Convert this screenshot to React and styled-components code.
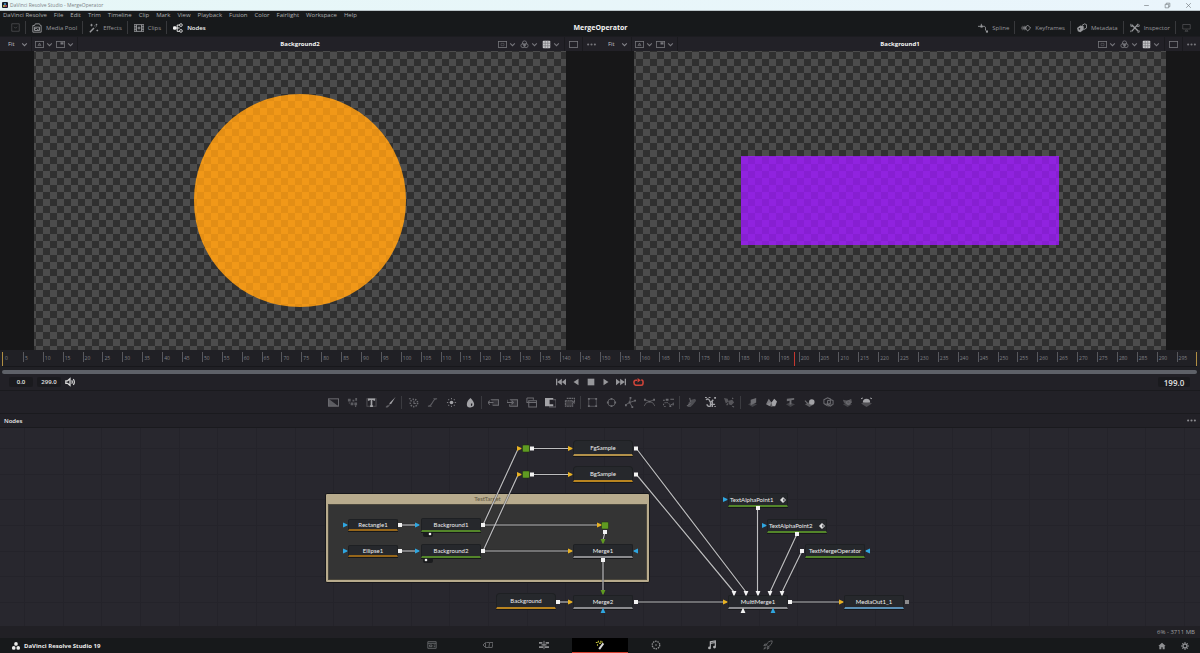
import styled, { createGlobalStyle, css } from "styled-components";

const GlobalStyle = createGlobalStyle`
  * {
    box-sizing: border-box;
  }

  body {
    margin: 0;
    background: #17191b;
    color: #a0a0a3;
    font-family: "Open Sans", "Noto Sans", sans-serif;
    font-size: 6px;
    line-height: 8px;
  }

  button,
  input,
  select {
    margin: 0;
    padding: 0;
    border: 0;
    background: none;
    color: inherit;
    font: inherit;
  }
`;

const Page = styled.div`
  display: flex;
  flex-direction: column;
  min-height: 100vh;
`;

const TitleBar = styled.header`
  display: flex;
  align-items: center;
  gap: 2px;
  height: 11px;
  padding: 0 8px 0 2px;
  background: linear-gradient(90deg, #e6f7f7, #eaf5fc);
  border-bottom: 1px solid #b9c4c8;
  color: #7c8286;
  font-size: 5px;
`;

const WindowButtons = styled.div`
  display: flex;
  gap: 14px;
  margin-left: auto;
  color: #70777b;
`;

const MenuBar = styled.nav`
  display: flex;
  align-items: center;
  gap: 7px;
  height: 8px;
  padding: 0 3px;
  color: #b0b1b3;
`;

const Toolbar = styled.div`
  display: flex;
  align-items: center;
  justify-content: space-between;
  height: 17px;
  padding: 0 4px 0 5px;
`;

const ToolGroup = styled.div`
  display: flex;
  flex: 1;
  align-items: center;
  justify-content: ${(props) => (props.$end ? "flex-end" : "flex-start")};
`;

const ToolButton = styled.button`
  display: flex;
  align-items: center;
  gap: 4px;
  height: 13px;
  padding: 0 5px 0 6px;
  border-left: ${(props) => (props.$first ? "0" : "1px solid #38393c")};
  color: ${(props) => (props.$active ? "#f2f2f2" : "#97989b")};
  font-weight: ${(props) => (props.$active ? 600 : 400)};
`;

const ProjectName = styled.h1`
  margin: 0;
  color: #f4f4f4;
  font-size: 7px;
  font-weight: 700;
`;

const IconButton = styled.button`
  display: flex;
  align-items: center;
  justify-content: center;
  gap: 2px;
`;

const Viewers = styled.main`
  display: flex;
  flex: 1;
  min-height: 200px;
`;

const Viewer = styled.section`
  display: flex;
  flex: 1;
  flex-direction: column;
  min-width: 0;
  background: #171718;
`;

const ViewerBar = styled.div`
  display: flex;
  align-items: center;
  justify-content: space-between;
  height: 15px;
  padding: 0 4px;
  background: #222127;
  border-top: 1px solid #1c1c20;
  color: #77777c;
`;

const ViewerGroup = styled.div`
  display: flex;
  flex: 1;
  align-items: center;
  gap: ${(props) => (props.$end ? 4 : 3)}px;
  justify-content: ${(props) => (props.$end ? "flex-end" : "flex-start")};
`;

const ViewerTitle = styled.h2`
  margin: 0;
  color: #f4f4f4;
  font-size: 6px;
  font-weight: 700;
`;

const FitLabel = styled.label`
  display: flex;
  align-items: center;
  gap: 5px;
  padding-left: 4px;
  color: #c0c0c4;

  svg {
    color: #85858a;
  }
`;

const FitSelect = styled.select`
  width: 8px;
  appearance: none;
  outline: none;
`;

const Divider = styled.span`
  width: 1px;
  height: 14px;
  background: #1a1a1e;
`;

const ViewerStage = styled.div`
  display: flex;
  flex: 1;
  justify-content: center;
`;

const Checkerboard = styled.div`
  position: relative;
  display: flex;
  align-items: center;
  justify-content: center;
  height: 100%;
  aspect-ratio: 16 / 9;
  background: conic-gradient(
      #333333 25%,
      #4c4c4c 0 50%,
      #333333 0 75%,
      #4c4c4c 0
    )
    2px 1px / 14px 14px;

  /* lets the checks show through the translucent shapes */
  &::after {
    content: "";
    position: absolute;
    inset: 0;
    pointer-events: none;
    background: conic-gradient(
        rgba(0, 0, 0, 0.05) 25%,
        transparent 0 50%,
        rgba(0, 0, 0, 0.05) 0 75%,
        transparent 0
      )
      2px 1px / 14px 14px;
  }
`;

const Circle = styled.div`
  width: 40%;
  aspect-ratio: 1;
  border-radius: 50%;
  background: rgba(255, 158, 20, 0.92);
`;

const Bar = styled.div`
  width: 60%;
  height: 30%;
  background: rgba(150, 32, 235, 0.92);
`;

const Timeline = styled.div`
  height: 24px;
  padding: 2px 3px 0 2px;
  background: #202025;
`;

const Ruler = styled.div`
  position: relative;
  display: flex;
  height: 14px;
  border-left: 1px solid #b18f43;
  border-right: 1px solid #b18f43;
`;

const Tick = styled.span`
  flex: 1;
  min-width: 0;
  height: 10px;
  padding: 2px 0 0 1px;
  border-left: 1px solid ${(props) => (props.$hidden ? "transparent" : "#58585d")};
  color: #808085;
  font-size: 5px;
`;

const Playhead = styled.span`
  position: absolute;
  top: 0;
  bottom: 0;
  width: 1px;
  background: #c5372f;
`;

const ScrollTrack = styled.div`
  height: 8px;
  padding-top: 3px;
  border-top: 1px solid #17171b;
`;

const ScrollThumb = styled.div`
  height: 4px;
  border-radius: 2px;
  background: #5e6168;
`;

const Transport = styled.div`
  display: flex;
  align-items: center;
  justify-content: space-between;
  height: 17px;
  padding: 0 10px 0 9px;
  background: #222127;
  border-bottom: 1px solid #1a1a1e;
`;

const TransportGroup = styled.div`
  display: flex;
  flex: 1;
  align-items: center;
  gap: 4px;
  color: #dcdcdc;
  justify-content: ${(props) => (props.$end ? "flex-end" : "flex-start")};
`;

const PlaybackButtons = styled.div`
  display: flex;
  gap: 5px;
  color: #97979b;
`;

const LoopButton = styled(IconButton)`
  margin-left: 2px;
  color: #cf4439;
`;

const TimeField = styled.input`
  width: ${(props) => (props.$large ? 32 : 24)}px;
  height: 10px;
  border-radius: 2px;
  background: #1a1a1e;
  color: #e3e3e3;
  font-size: ${(props) => (props.$large ? 8 : 6)}px;
  font-weight: 600;
  text-align: center;
`;

const EffectsBar = styled.div`
  display: flex;
  align-items: center;
  justify-content: center;
  height: 23px;
  background: #222127;
  border-bottom: 1px solid #1a1a1e;
`;

const EffectGroup = styled.div`
  display: flex;
  align-items: center;

  & + & {
    margin-left: 1px;
    padding-left: 2px;
    border-left: 1px solid #3b3b40;
  }
`;

const EffectButton = styled(IconButton)`
  width: 19px;
  height: 13px;
  color: ${(props) => (props.$bright ? "#a3a3a7" : "#6c6c71")};
`;

const NodesHeader = styled.div`
  display: flex;
  align-items: center;
  justify-content: space-between;
  height: 14px;
  padding: 0 4px;
  background: #222127;
  border-bottom: 1px solid #1a1a1e;
  color: #8c8c90;
`;

const NodesTitle = styled.h2`
  margin: 0;
  color: #ececec;
  font-size: 6px;
  font-weight: 600;
`;

const Graph = styled.section`
  position: relative;
  height: 198px;
  overflow: hidden;
  background: #28272e;
`;

const GraphLayer = styled.svg`
  position: absolute;
  top: 0;
  left: 0;
  width: 100%;
  height: 100%;
`;

const Group = styled.div`
  position: absolute;
  top: 65px;
  left: 325px;
  display: flex;
  flex-direction: column;
  width: 325px;
  height: 90px;
  padding: 0 2px 2px;
  border: 1px solid #17171a;
  border-radius: 2px;
  background: #b8ab8d;
  color: #5f563f;
  font-family: Lato, "Open Sans", sans-serif;
  text-align: center;
`;

const GroupTitle = styled.div`
  height: 10px;
  line-height: 10px;
`;

const GroupBody = styled.div`
  flex: 1;
  border: 1px solid #4b473c;
  background: #343434;
`;

const NodeBox = styled.div`
  position: absolute;
  top: ${(props) => props.$y}px;
  left: ${(props) => props.$x}px;
  display: flex;
  align-items: center;
  justify-content: ${(props) => (props.$keyed ? "space-between" : "center")};
  width: ${(props) => (props.$small ? 50 : 60)}px;
  height: ${(props) => (props.$small ? 12 : 14)}px;
  padding: 0 1px;
  border: 1px solid #1e2023;
  border-bottom: 2px solid ${(props) => props.$color};
  border-radius: 2px 2px 0 0;
  background: #26282c;
  box-shadow: 0 1px 0 #17181a;
  color: #f0f0f1;
  font-family: Lato, "Open Sans", sans-serif;
  white-space: nowrap;

  ${(props) =>
    props.$tall &&
    css`
      height: 16px;
      border-radius: 4px 4px 0 0;
    `}
`;

const StatusBar = styled.div`
  display: flex;
  align-items: center;
  justify-content: flex-end;
  height: 12px;
  padding: 0 5px;
  background: #212025;
`;

const PageBar = styled.footer`
  display: flex;
  align-items: center;
  justify-content: space-between;
  height: 15px;
  padding: 0 11px;
`;

const Brand = styled.div`
  display: flex;
  flex: 1;
  align-items: center;
  gap: 3px;
  color: #ececec;
  font-weight: 700;
`;

const Pages = styled.nav`
  display: flex;
`;

const PageButton = styled(IconButton)`
  width: 56px;
  height: 15px;
  border-bottom: 1px solid ${(props) => (props.$active ? "#d8402f" : "transparent")};
  background: ${(props) => (props.$active ? "#000" : "none")};
  color: ${(props) => props.$tint || "#66676a"};
`;

const PageBarEnd = styled.div`
  display: flex;
  flex: 1;
  justify-content: flex-end;
  gap: 15px;
  color: #8e8f92;
`;

// Filled parts of the otherwise stroked drawings.
const f = { fill: "currentColor", stroke: "none" };
const slab = <path {...f} opacity=".45" d="M1 8l4-2 6 2-5 3z" />;

const icons = {
  app: (
    <>
      <rect width="12" height="12" rx="2" fill="#16202b" stroke="none" />
      <circle cx="6" cy="4" r="2" fill="#4aa3d8" stroke="none" />
      <circle cx="4" cy="8" r="2" fill="#d9c34a" stroke="none" />
      <circle cx="8" cy="8" r="2" fill="#d2506a" stroke="none" />
    </>
  ),
  brand: (
    <>
      <circle {...f} cx="6" cy="3.500" r="2.200" />
      <circle {...f} cx="3.300" cy="8.300" r="2.200" />
      <circle {...f} cx="8.700" cy="8.300" r="2.200" />
    </>
  ),
  minimize: <path d="M2 6h8" />,
  restore: <path d="M2 4h6v6H2zM4 4V2h6v6H8" />,
  close: <path d="M2 2l8 8M10 2l-8 8" />,
  boxDown: <path d="M1 1h10v10H1zM4 5l2 2 2-2" opacity=".4" />,
  chevron: <path d="M2 4l4 4 4-4" strokeWidth="1.800" />,
  mediaPool: <path d="M1 3h2l1-2h5l1 2h1v8H1zM3 9V5h6v4zM3 8l2-2 2 2 1-1 1 1" />,
  effects: (
    <>
      <path d="M1 11l5-5" strokeWidth="1.8" />
      <path d="M3 1v3M1.500 2.500h3M9 1v2M8 2h2M8 5l1-1M10 8v2M9 9h2M7 3v1" />
    </>
  ),
  clips: <path d="M0 2h12v8H0zM3 2v8M9 2v8M0 4h3M0 6h3M0 8h3M9 4h3M9 6h3M9 8h3M5 5h2v2H5z" />,
  nodes: (
    <>
      <path d="M3 6h2V2.500h3M5 6v4h3M5 6h3" />
      <rect {...f} x="0" y="4" width="4" height="4" rx="1.500" />
      <rect x="8" y="1" width="3" height="3" rx="1" />
      <rect x="8" y="8" width="3" height="3" rx="1" />
    </>
  ),
  spline: (
    <>
      <path d="M0 4h7c2 0 2 1 2 3v2M4 4V1" />
      <rect {...f} x="3" y="3" width="2.500" height="2.500" />
      <rect {...f} x="9.500" y="9" width="2.500" height="2.500" />
    </>
  ),
  keyframes: (
    <>
      <path {...f} d="M2 3l3 3-3 3-3-3z" opacity=".35" />
      <path {...f} d="M4.500 3l3 3-3 3-3-3z" opacity=".5" />
      <path d="M8 2.500L11.500 6 8 9.500 4.500 6z" />
    </>
  ),
  metadata: (
    <>
      <path {...f} d="M0 6l4-3 4 1v4l-4 3-3-1z" />
      <path d="M6 3l3-2 2.500 1v4L8 8" />
      <circle cx="3" cy="7" r="1" fill="#17191b" stroke="none" />
    </>
  ),
  inspector: (
    <>
      <path d="M2 2l8 8M10 1L2 10" strokeWidth="1.600" />
      <path d="M1 1v3h2M8 4h3V2M9 11h2V9M1 9v2" />
    </>
  ),
  monitor: <path d="M1 2h10v6H1zM4 11l2-2 2 2z" opacity=".4" />,
  bufferA: (
    <>
      <rect x="0.500" y="2" width="11" height="8" />
      <path d="M4 8l2-4 2 4M5 7h2" />
    </>
  ),
  subView: (
    <>
      <rect x="0.500" y="2" width="11" height="8" />
      <rect {...f} x="6" y="3" width="4" height="3" />
    </>
  ),
  roi: (
    <>
      <rect x="0.500" y="2" width="11" height="8" />
      <path d="M4 4.500v3M4 4.500h4v3H4" opacity=".5" />
    </>
  ),
  rgb: (
    <>
      <circle cx="6" cy="4" r="2.800" />
      <circle cx="4" cy="7.500" r="2.800" />
      <circle cx="8" cy="7.500" r="2.800" />
      <circle {...f} cx="6" cy="6.500" r="1.600" />
    </>
  ),
  grid: (
    <>
      <rect x="1" y="1" width="10" height="10" rx="1" fill="#c9c9cc" stroke="none" />
      <path d="M4.300 1v10M7.700 1v10M1 4.300h10M1 7.700h10" stroke="#77777c" strokeWidth=".9" />
    </>
  ),
  frame: <rect x="0.500" y="2" width="11" height="8" />,
  dots: (
    <>
      <circle {...f} cx="1.500" cy="6" r="1.400" />
      <circle {...f} cx="6" cy="6" r="1.400" />
      <circle {...f} cx="10.500" cy="6" r="1.400" />
    </>
  ),
  speaker: (
    <>
      <path d="M1 4.500h2l3-2.500v8L3 7.500H1z" strokeWidth="1.500" />
      <path d="M8 4q1.500 2 0 4M10 2.500q2.500 3.500 0 7" strokeWidth="1.400" />
    </>
  ),
  first: <path {...f} d="M0 2h1.500v8H0zM7 2v8L1.500 6zM12 2v8L7 6z" />,
  reverse: <path {...f} d="M9 2v8L3 6z" />,
  stop: <rect {...f} x="2" y="2" width="8" height="8" />,
  play: <path {...f} d="M3 2v8l6-4z" />,
  last: <path {...f} d="M10.500 2H12v8h-1.500zM5 2v8l5.500-4zM0 2v8l5-4z" />,
  loop: (
    <>
      <path d="M4.500 3.500H3Q1 3.500 1 6t2 3h6q2 0 2-3T9 3.500" strokeWidth="1.700" />
      <path {...f} d="M5 1v5l3.500-2.500z" />
    </>
  ),
  background: (
    <>
      <rect x="0.500" y="2" width="11" height="8" />
      <path {...f} d="M.5 2l11 8H.5z" opacity=".8" />
    </>
  ),
  noise: (
    <>
      <path {...f} d="M1 2h3v3H1zM6 3h2v2H6zM9 1h2v3H9zM4 6h3v3H4zM8 6h3v3H8z" opacity=".8" />
      <path {...f} d="M2 6h1v1H2zM9 9h1v2H9z" />
    </>
  ),
  text: (
    <>
      <path d="M1 2h10v8H1z" opacity=".35" />
      <path d="M3 4V2.500h6V4M6 2.500V10M4.500 10h3" strokeWidth="1.800" />
    </>
  ),
  paint: (
    <>
      <path {...f} d="M11.500 0l-5 8-2-1z" />
      <path d="M5 8q-1 3-4 3 2-1 1.500-2" opacity=".5" />
    </>
  ),
  tracker: (
    <>
      <circle cx="6.500" cy="6.500" r="4" strokeDasharray="1.500 1.300" strokeWidth="1.700" />
      <path d="M6.500 4v3h2M1 2h2" />
    </>
  ),
  curve: <path d="M1 10q3 0 5-4t5-4M1 10h4M7 2h4" opacity=".8" />,
  sun: (
    <>
      <circle {...f} cx="6" cy="6" r="2" />
      <path
        d="M6 1v1.500M6 9.500V11M1 6h1.500M9.500 6H11M2.500 2.500l1 1M8.500 8.500l1 1M9.500 2.500l-1 1M3.500 8.500l-1 1"
        opacity=".7"
      />
    </>
  ),
  drop: <path {...f} d="M6 1q4 4 4 7t-4 3.500T2 8t4-7zM6.500 7v3q2-.5 1.500-3z" fillRule="evenodd" />,
  merge: (
    <>
      <path {...f} d="M4 3h7.500v6H4z" opacity=".25" />
      <path d="M3 3h8.500v6H5M0 6h6M2 4L0 6l2 2.500" />
    </>
  ),
  matte: (
    <>
      <path {...f} d="M4 3h7.500v7H4z" opacity=".25" />
      <path d="M3 3h8.500v7H3V8M0 3v3h6M5 4l2 2-2 2" />
    </>
  ),
  layers: <path d="M1 1h7v2M1 1v5h2M3 4h8.500v7H3zM3 6h8" />,
  mask: (
    <>
      <path {...f} d="M0 1h9v9H0zM5 3v5h4V3z" fillRule="evenodd" />
      <path d="M9 3h3v8H5v-1" opacity=".5" />
    </>
  ),
  transform: (
    <>
      <rect {...f} x="1.500" y="4" width="8" height="6" opacity=".35" />
      <path d="M1.500 4h8v6h-8zM3 1.500h8.500V7M10 5l1.500 2" strokeDasharray="2 .6" />
    </>
  ),
  rectMask: (
    <>
      <rect x="2" y="2" width="8" height="8" strokeWidth=".7" />
      <path {...f} d="M1 1h2v2H1zM9 1h2v2H9zM1 9h2v2H1zM9 9h2v2H9z" />
    </>
  ),
  ellipseMask: (
    <>
      <circle cx="6" cy="6" r="4" strokeWidth=".8" />
      <path {...f} d="M5 1h2v2H5zM5 9h2v2H5zM1 5h2v2H1zM9 5h2v2H9z" />
    </>
  ),
  polygon: (
    <>
      <path d="M0 9l5-3 6-2M6 1L5 6l3 5" strokeWidth=".9" />
      <path {...f} d="M4 5h2v2H4zM10 3h2v2h-2zM0 8h2v2H0zM7 10h2v2H7zM5 0h2v2H5z" />
    </>
  ),
  bspline: (
    <>
      <path d="M0 10q2-5 6-5t6 5M1 3l5 2 5-2" strokeWidth=".8" />
      <path {...f} d="M5 4h2v2H5zM0 2h2v2H0zM10 2h2v2h-2z" />
    </>
  ),
  wand: (
    <>
      <path d="M0 9q3-5 6-2t6-1" strokeDasharray="1.500 1" />
      <path {...f} d="M0 3h2v1H0zM3 2h3v2H3zM8 2h4v1H8zM1 10h2v1H1zM7 9h2v2H7zM10 8h2v1h-2z" />
    </>
  ),
  emitter: (
    <>
      <path {...f} d="M3 6l3-3 4-1 1 2-3 4-3 3-3 0z" opacity=".6" />
      <path d="M4 1l1 4M1 10l4-3" />
    </>
  ),
  particles: (
    <>
      <path d="M1 3q3-2 4 1t4-1M2 8q1 3 4 2V6M8 5v6M6 8h5" strokeWidth="1.500" />
      <path {...f} d="M0 0h2v1H0zM4 0h2v1H4zM10 0h2v2h-2zM10 10h2v1h-2z" />
    </>
  ),
  pRender: (
    <>
      <path {...f} d="M0 1l4 1 1 3-3 2zM5 4l4-1 2 3-3 3-3-1z" opacity=".7" />
      <path d="M3 9l1-2M9 10l2 1M9 1l1 1" />
    </>
  ),
  plane: (
    <>
      {slab}
      <path {...f} d="M4 3l6-2v5L4 9z" />
    </>
  ),
  shapes: (
    <>
      {slab}
      <path {...f} d="M0 8l3-6 3 4-2 4z" opacity=".7" />
      <path {...f} d="M6 6l3-4 3 3-2 5H7z" />
    </>
  ),
  text3d: (
    <>
      {slab}
      <path {...f} d="M2 2l8-1v2L7 3.500V8L5 8.500V4L2 4.500z" />
    </>
  ),
  sphere: (
    <>
      {slab}
      <circle {...f} cx="8.500" cy="5.500" r="3" />
      <path d="M1 4l3 3" opacity=".6" />
    </>
  ),
  cube: (
    <>
      {slab}
      <path d="M1 3l4-2 3 1v5L4 9 1 7zM5 4l4-1 2 1v4L8 10 5 8z" />
    </>
  ),
  camera: (
    <>
      {slab}
      <path {...f} d="M1 3l5 1 4-2 1 4-4 3-5-3z" opacity=".7" />
      <circle cx="7" cy="6" r="2" />
    </>
  ),
  light: (
    <>
      <path {...f} d="M0 7l6-2 6 2-6 4z" opacity=".35" />
      <path {...f} d="M2 6q0-4 4-4t4 4z" />
      <path d="M0 2l2-1M12 2l-2-1" />
    </>
  ),
  media: <path d="M1 2h10v8H1zM1 4h10M3 6h3v2H3zM8 6h2M8 8h2" />,
  cut: <path d="M0 6l3-3v6zM4 3l4 0-1 6H3M8 3h4l-1 6H7" />,
  edit: (
    <>
      <path {...f} d="M0 2.500h4v2H0zM8 2.500h4v2H8zM0 7.500h5v2H0zM7 7.500h5v2H7zM3 5h6v1.500H3z" />
      <path d="M6 1v10" />
    </>
  ),
  fusion: (
    <>
      <path d="M5 11l5-7" stroke="#dadada" strokeWidth="2.400" />
      <path d="M1 3h2M4 1v2M5 4h2M7 1v2M3 5v2M8 3l1-1" stroke="#c7c63a" strokeWidth="1.300" />
    </>
  ),
  color: (
    <>
      <circle cx="6" cy="6" r="4.500" strokeDasharray="1.800 1" strokeWidth="1.600" />
      <circle {...f} cx="6" cy="6" r="1" />
    </>
  ),
  music: (
    <>
      <path d="M4 9V2l6-1v7M4 4l6-1" strokeWidth="1.400" />
      <circle {...f} cx="3" cy="9.500" r="1.700" />
      <circle {...f} cx="9" cy="8.500" r="1.700" />
    </>
  ),
  rocket: <path d="M11 1Q6 1 4 6l2 2q5-2 5-7zM4 5H2L1 7l3-1M7 8v2l-2 1 1-3M3 8l-2 3 3-2" />,
  home: <path {...f} d="M6 1l5.500 5H10v5H7V8H5v3H2V6H.5z" />,
  gear: (
    <>
      <circle cx="6" cy="6" r="3" strokeWidth="2" />
      <path d="M6 0v2M6 10v2M0 6h2M10 6h2M2 2l1 1M9 9l1 1M10 2L9 3M3 9l-1 1" strokeWidth="1.600" />
    </>
  ),
};

const Icon = ({ name, size = 9 }) => (
  <svg
    width={size}
    height={size}
    viewBox="0 0 12 12"
    fill="none"
    stroke="currentColor"
    strokeWidth="1.100"
    aria-hidden="true"
  >
    {icons[name]}
  </svg>
);

const menus = [
  "DaVinci Resolve", "File", "Edit", "Trim", "Timeline", "Clip", "Mark",
  "View", "Playback", "Fusion", "Color", "Fairlight", "Workspace", "Help",
];

const leftTools = [
  { icon: "mediaPool", label: "Media Pool" },
  { icon: "effects", label: "Effects" },
  { icon: "clips", label: "Clips" },
  { icon: "nodes", label: "Nodes", active: true },
];

const rightTools = [
  { icon: "spline", label: "Spline" },
  { icon: "keyframes", label: "Keyframes" },
  { icon: "metadata", label: "Metadata" },
  { icon: "inspector", label: "Inspector" },
];

const effectGroups = [
  ["background", "noise", "text", "paint"],
  ["tracker", "curve", "sun", "drop"],
  ["merge", "matte", "layers", "mask", "transform"],
  ["rectMask", "ellipseMask", "polygon", "bspline", "wand"],
  ["emitter", "particles", "pRender"],
  ["plane", "shapes", "text3d", "sphere", "cube", "camera", "light"],
];

const brightEffects = ["text", "paint", "sun", "drop", "mask", "particles", "shapes", "sphere", "light"];

const pages = ["media", "cut", "edit", "fusion", "color", "music", "rocket"];
const pageTints = { edit: "#8a8b8d", color: "#8a8b8d", music: "#b0b1b3" };

const yellow = "#e8b224";
const blue = "#2fa6e0";
const green = "#5f9a22";
const white = "#f2f2f2";

const nodes = [
  { label: "FgSample", x: 573, y: 12, color: "#b3914a", tall: true },
  { label: "BgSample", x: 573, y: 38, color: "#b98420", tall: true },
  { label: "Rectangle1", x: 348, y: 91, color: "#96661a", small: true },
  { label: "Ellipse1", x: 348, y: 117, color: "#96661a", small: true },
  { label: "Background1", x: 421, y: 90, color: "#53852a" },
  { label: "Background2", x: 421, y: 116, color: "#53852a" },
  { label: "Merge1", x: 573, y: 116, color: "#8a8b8e" },
  { label: "Background", x: 496, y: 165, color: "#b98420", tall: true },
  { label: "Merge2", x: 573, y: 167, color: "#8a8b8e" },
  { label: "TextAlphaPoint1", x: 728, y: 65, color: "#53852a", keyed: true },
  { label: "TextAlphaPoint2", x: 767, y: 91, color: "#53852a", keyed: true },
  { label: "TextMergeOperator", x: 805, y: 116, color: "#53852a" },
  { label: "MultiMerge1", x: 728, y: 167, color: "#8a8b8e" },
  { label: "MediaOut1_1", x: 844, y: 167, color: "#5b8fb5" },
];

const wires = [
  "M400 97H416", "M400 123H416",
  "M483 97L518 21", "M483 123L518 47",
  "M483 97H598", "M483 123H569",
  "M532 20.500H569", "M532 46.500H569",
  "M636 20L746 164", "M636 46L734 164",
  "M605 104L603 112", "M603 132V164",
  "M558 174H569", "M636 174H724", "M790 174H840",
  "M757.500 80V164", "M797 106L770 164", "M802 123L782 164",
];

const outputs = [
  [400, 97], [400, 123], [483, 97], [483, 123], [532, 20.5], [532, 46.5],
  [636, 20.5], [636, 46.5], [605, 104], [603, 132], [558, 174], [636, 174],
  [758, 80], [797, 106], [802, 123], [790, 174],
];

const routers = [[526, 20.5], [526, 46.5], [605, 97.5]];

// x, y, rotation in degrees, colour
const inputs = [
  [519, 20.5, 0, yellow], [519, 46.5, 0, yellow], [570, 20.5, 0, yellow],
  [570, 46.5, 0, yellow], [599, 97, 0, yellow], [570, 123, 0, yellow],
  [570, 174, 0, yellow], [725, 174, 0, yellow], [841, 174, 0, yellow],
  [345, 97, 0, blue], [345, 123, 0, blue], [417, 97, 0, blue],
  [417, 123, 0, blue], [725, 71.5, 0, blue], [764, 97.5, 0, blue],
  [636, 123, 180, blue], [868, 123, 180, blue], [603, 183, -90, blue],
  [773, 183, -90, blue], [743, 183, -90, white], [603, 113, 90, green],
  [603, 164, 90, green], [734, 165, 90, white], [746, 165, 90, white],
  [758, 165, 90, white], [770, 165, 90, white], [782, 165, 90, white],
];

const GraphGrid = () => (
  <GraphLayer aria-hidden="true">
    {Array.from({ length: 60 }, (_, i) => (
      <rect key={i} x={Math.round(24 + (i * 116) / 3)} width="1" height="100%" fill="#24232a" />
    ))}
    {Array.from({ length: 8 }, (_, i) => (
      <rect key={i} y={Math.round(20 + (i * 77) / 3)} width="100%" height="1" fill="#24232a" />
    ))}
  </GraphLayer>
);

const Wires = () => (
  <GraphLayer aria-hidden="true">
    <g fill="none" stroke="#141416" strokeWidth="2.400" opacity=".4">
      {wires.map((d) => <path key={d} d={d} />)}
    </g>
    <g fill="none" stroke="#bdbdbf" strokeWidth="1.200">
      {wires.map((d) => <path key={d} d={d} />)}
    </g>
    {routers.map(([x, y]) => (
      <rect key={y} x={x - 3.5} y={y - 3.5} width="7" height="7" rx="1" fill={green} stroke="#1c2a10" strokeWidth=".5" />
    ))}
    {outputs.map(([x, y]) => (
      <rect key={`${x}-${y}`} x={x - 2} y={y - 2} width="4" height="4" fill={white} />
    ))}
    <rect x="905" y="172" width="4" height="4" fill="#8b8b8d" />
    {inputs.map(([x, y, turn, color]) => (
      <path
        key={`${x}-${y}`}
        d="M-2 -2.400L2.400 -.5V.5L-2 2.400z"
        fill={color}
        transform={`translate(${x} ${y}) rotate(${turn})`}
      />
    ))}
    <rect x="423" y="104" width="10" height="5" rx="2" fill="#1b1c1e" />
    <circle cx="430" cy="106" r="1.300" fill={white} />
    <rect x="423" y="130" width="10" height="5" rx="2" fill="#1b1c1e" />
    <circle cx="426" cy="132" r="1.300" fill={white} />
  </GraphLayer>
);

const KeyMark = () => (
  <svg width="6" height="6" viewBox="0 0 6 6" aria-hidden="true">
    <path d="M3 0L6 3 3 6 0 3z" fill="#e2e2e3" />
    <path d="M3.400 1.400L5 3 3.400 4.600z" fill="#26282c" />
  </svg>
);

const DropIcon = ({ name, label }) => (
  <IconButton aria-label={label}>
    <Icon name={name} />
    <Icon name="chevron" size={7} />
  </IconButton>
);

const ViewerPanel = ({ title, children }) => (
  <Viewer>
    <ViewerBar>
      <ViewerGroup>
        <FitLabel>
          <FitSelect aria-label={`${title} zoom`}>
            <option>Fit</option>
          </FitSelect>
          <Icon name="chevron" size={7} />
        </FitLabel>
        <Divider />
        <DropIcon name="bufferA" label="Buffer" />
        <DropIcon name="subView" label="Sub view" />
        <Divider />
      </ViewerGroup>
      <ViewerTitle>{title}</ViewerTitle>
      <ViewerGroup $end>
        <DropIcon name="roi" label="Region of interest" />
        <DropIcon name="rgb" label="Channels" />
        <DropIcon name="grid" label="Checker underlay" />
        <Divider />
        <IconButton aria-label="Single view">
          <Icon name="frame" />
        </IconButton>
        <Divider />
        <IconButton aria-label="Viewer options">
          <Icon name="dots" />
        </IconButton>
      </ViewerGroup>
    </ViewerBar>
    <ViewerStage>
      <Checkerboard>{children}</Checkerboard>
    </ViewerStage>
  </Viewer>
);

const TimeRuler = () => (
  <Timeline>
    <Ruler>
      {Array.from({ length: 60 }, (_, i) => (
        <Tick key={i} $hidden={i === 0}>
          {i * 5}
        </Tick>
      ))}
      <Playhead style={{ left: `${(199 / 300) * 100}%` }} />
    </Ruler>
    <ScrollTrack>
      <ScrollThumb />
    </ScrollTrack>
  </Timeline>
);

const App = () => {
  return (
    <>
      <GlobalStyle />
      <Page>
        <TitleBar>
          <Icon name="app" size={6} />
          DaVinci Resolve Studio - MergeOperator
          <WindowButtons>
            {["minimize", "restore", "close"].map((name) => (
              <IconButton key={name} aria-label={name}>
                <Icon name={name} size={7} />
              </IconButton>
            ))}
          </WindowButtons>
        </TitleBar>
        <MenuBar>
          {menus.map((menu) => (
            <button key={menu}>{menu}</button>
          ))}
        </MenuBar>
        <Toolbar>
          <ToolGroup>
            <ToolButton $first aria-label="Layout">
              <Icon name="boxDown" />
            </ToolButton>
            {leftTools.map((tool) => (
              <ToolButton key={tool.label} $active={tool.active}>
                <Icon name={tool.icon} size={10} />
                {tool.label}
              </ToolButton>
            ))}
          </ToolGroup>
          <ProjectName>MergeOperator</ProjectName>
          <ToolGroup $end>
            {rightTools.map((tool, i) => (
              <ToolButton key={tool.label} $first={i === 0}>
                <Icon name={tool.icon} size={10} />
                {tool.label}
              </ToolButton>
            ))}
            <ToolButton aria-label="Monitor">
              <Icon name="monitor" />
            </ToolButton>
          </ToolGroup>
        </Toolbar>
        <Viewers>
          <ViewerPanel title="Background2">
            <Circle />
          </ViewerPanel>
          <ViewerPanel title="Background1">
            <Bar />
          </ViewerPanel>
        </Viewers>
        <TimeRuler />
        <Transport>
          <TransportGroup>
            <TimeField aria-label="Range start" defaultValue="0.0" />
            <TimeField aria-label="Range end" defaultValue="299.0" />
            <IconButton aria-label="Mute">
              <Icon name="speaker" size={10} />
            </IconButton>
          </TransportGroup>
          <PlaybackButtons>
            {["first", "reverse", "stop", "play", "last"].map((name) => (
              <IconButton key={name} aria-label={name}>
                <Icon name={name} size={10} />
              </IconButton>
            ))}
            <LoopButton aria-label="loop">
              <Icon name="loop" size={11} />
            </LoopButton>
          </PlaybackButtons>
          <TransportGroup $end>
            <TimeField $large aria-label="Current frame" defaultValue="199.0" />
          </TransportGroup>
        </Transport>
        <EffectsBar>
          {effectGroups.map((group) => (
            <EffectGroup key={group[0]}>
              {group.map((name) => (
                <EffectButton
                  key={name}
                  aria-label={name}
                  $bright={brightEffects.includes(name)}
                >
                  <Icon name={name} size={11} />
                </EffectButton>
              ))}
            </EffectGroup>
          ))}
        </EffectsBar>
        <NodesHeader>
          <NodesTitle>Nodes</NodesTitle>
          <IconButton aria-label="Node options">
            <Icon name="dots" />
          </IconButton>
        </NodesHeader>
        <Graph>
          <GraphGrid />
          <Group>
            <GroupTitle>TestTarget</GroupTitle>
            <GroupBody />
          </Group>
          {nodes.map((node) => (
            <NodeBox
              key={node.label}
              $x={node.x}
              $y={node.y}
              $color={node.color}
              $small={node.small}
              $tall={node.tall}
              $keyed={node.keyed}
            >
              {node.label}
              {node.keyed && <KeyMark />}
            </NodeBox>
          ))}
          <Wires />
        </Graph>
        <StatusBar>6% - 3711 MB</StatusBar>
        <PageBar>
          <Brand>
            <Icon name="brand" size={10} />
            DaVinci Resolve Studio 19
          </Brand>
          <Pages>
            {pages.map((name) => (
              <PageButton
                key={name}
                aria-label={name}
                $active={name === "fusion"}
                $tint={pageTints[name]}
              >
                <Icon name={name} size={10} />
              </PageButton>
            ))}
          </Pages>
          <PageBarEnd>
            <IconButton aria-label="Project manager">
              <Icon name="home" size={8} />
            </IconButton>
            <IconButton aria-label="Project settings">
              <Icon name="gear" size={8} />
            </IconButton>
          </PageBarEnd>
        </PageBar>
      </Page>
    </>
  );
};

export default App;
